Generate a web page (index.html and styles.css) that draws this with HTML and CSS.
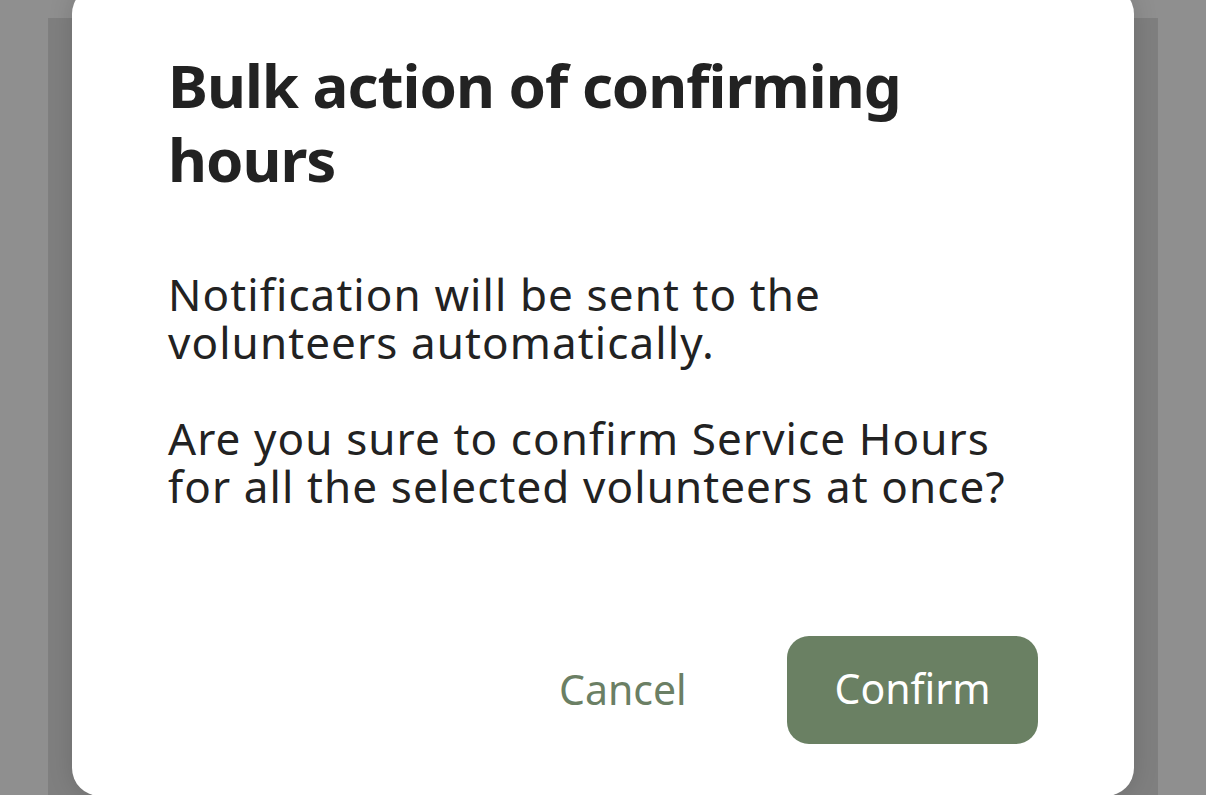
FILE: index.html
```html
<!DOCTYPE html>
<html>
<head>
<meta charset="utf-8">
<link rel="stylesheet" href="styles.css">
</head>
<body>
<div class="page">
  <div class="backcard"></div>
  <div class="dialog">
    <h1 class="title">Bulk action of confirming hours</h1>
    <div class="body">
      <p class="para">Notification will be sent to the volunteers automatically.</p>
      <p class="para">Are you sure to confirm Service Hours for all the selected volunteers at once?</p>
    </div>
    <div class="actions">
      <button class="btn btn-cancel">Cancel</button>
      <button class="btn btn-confirm">Confirm</button>
    </div>
  </div>
</div>
</body>
</html>
```
FILE: styles.css
```css
html, body {
  margin: 0;
  padding: 0;
  height: 100%;
  overflow: hidden;
}
body {
  background: #8f8f8f;
  font-family: "Noto Sans", "Open Sans", sans-serif;
}
.page {
  position: relative;
  width: 1206px;
  height: 795px;
  overflow: hidden;
}
.backcard {
  margin: 18px 48px 0 48px;
  height: 800px;
  background: #7f7f7f;
}
.dialog {
  position: absolute;
  left: 72px;
  top: -14px;
  width: 1062px;
  height: 810px;
  box-sizing: border-box;
  background: #fff;
  border-radius: 28px;
  padding: 62px 96px 0 96px;
  box-shadow: 0 0 24px rgba(0,0,0,0.15);
  display: flex;
  flex-direction: column;
}
.title {
  margin: 0;
  font-size: 60px;
  line-height: 74px;
  font-weight: 700;
  letter-spacing: -1px;
  color: #222;
  max-width: 760px;
}
.body {
  margin-top: 74px;
  color: #222;
  font-size: 44px;
  line-height: 48px;
  letter-spacing: 1.1px;
}
.para {
  margin: 0 0 48px 0;
}
.actions {
  margin-top: 78px;
  display: flex;
  justify-content: flex-end;
  align-items: center;
}
.btn {
  font-family: inherit;
  font-size: 41px;
  border: none;
  background: none;
  cursor: pointer;
  padding: 0;
}
.btn-cancel {
  color: #6b7f64;
  width: 228px;
  height: 108px;
  text-align: left;
  padding-bottom: 2px;
}
.btn-confirm {
  background: #6a8063;
  color: #fff;
  width: 251px;
  height: 108px;
  border-radius: 22px;
  padding-bottom: 4px;
}
```
